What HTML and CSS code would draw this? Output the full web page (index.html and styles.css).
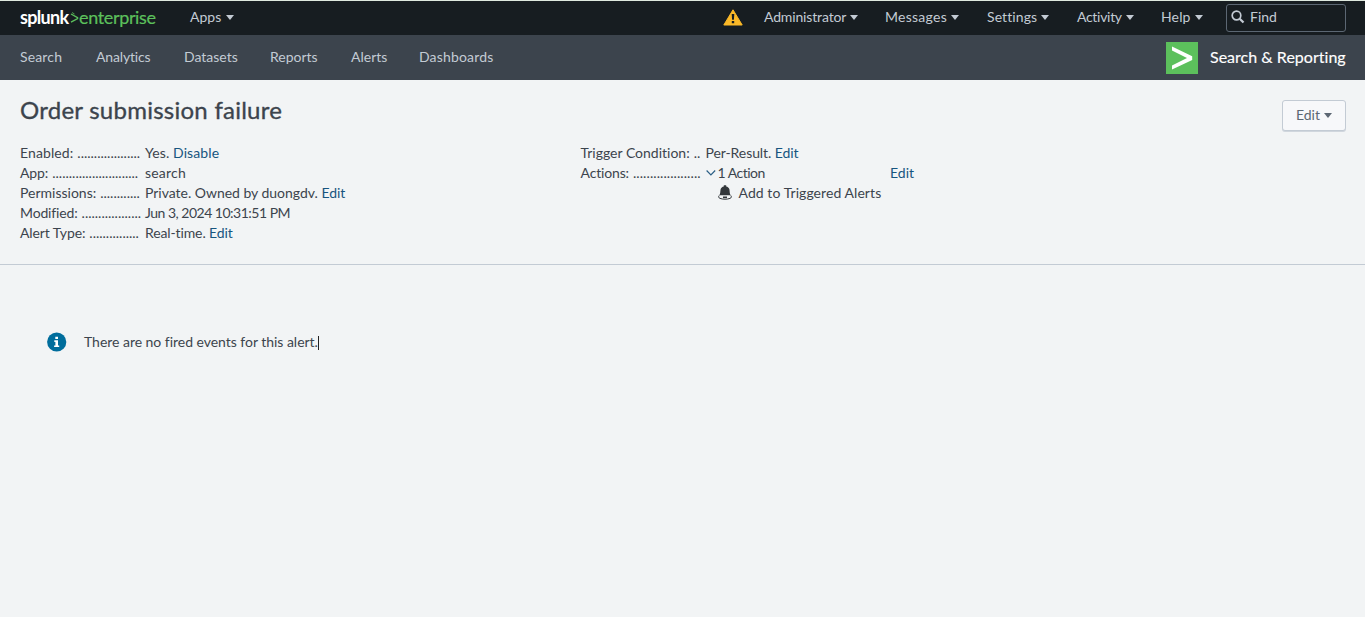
FILE: index.html
```html
<!DOCTYPE html>
<html lang="en">
<head>
<meta charset="utf-8">
<title>Order submission failure | Splunk</title>
<link rel="stylesheet" href="styles.css">
</head>
<body>
<header class="topbar">
  <a class="brand"><span class="brand-name">splunk</span><svg class="brand-arrow" width="9" height="14" viewBox="0 0 9 14"><path d="M1 3 7.600 6.700v.9L1 11.200" fill="none" stroke="#5cc05c" stroke-width="1.400"/><path d="M2 1.500 4.500 3" stroke="#5cc05c" stroke-width=".8"/></svg><span class="brand-product">enterprise</span></a>
  <a class="menu apps"><span>Apps</span><i class="caret"></i></a>
  <svg class="warning" width="20" height="17" viewBox="0 0 20 17"><path d="M10 .8 19.200 16H.8z" fill="#fbb928" stroke="#fbb928" stroke-linejoin="round"/><path d="M8.700 5h2.600l-.4 5.800H9.100zM8.800 12h2.400v2.300H8.800z" fill="#171d21"/></svg>
  <nav class="menus">
    <a class="menu admin"><span>Administrator</span><i class="caret"></i></a>
    <a class="menu messages"><span>Messages</span><i class="caret"></i></a>
    <a class="menu settings"><span>Settings</span><i class="caret"></i></a>
    <a class="menu activity"><span>Activity</span><i class="caret"></i></a>
    <a class="menu help"><span>Help</span><i class="caret"></i></a>
  </nav>
  <div class="find"><svg width="14" height="14" viewBox="0 0 14 14"><circle cx="5.500" cy="5.500" r="4.300" fill="none" stroke="#c3cbd4" stroke-width="1.700"/><path d="M8.700 8.700 12.500 12.500" stroke="#c3cbd4" stroke-width="2.300"/></svg><span>Find</span></div>
</header>
<div class="appbar">
  <a class="nav n-search">Search</a>
  <a class="nav n-analytics">Analytics</a>
  <a class="nav n-datasets">Datasets</a>
  <a class="nav n-reports">Reports</a>
  <a class="nav n-alerts">Alerts</a>
  <a class="nav n-dash">Dashboards</a>
  <div class="app">
    <svg width="32" height="32" viewBox="0 0 32 32"><path d="M0 0h32v32H0z" fill="#5cc05c"/><path d="M6 4.500v4.100L21 16 6 23.500v4.100L26.200 18v-3.800z" fill="#fff"/></svg>
    <span class="app-name">Search &amp; Reporting</span>
  </div>
</div>
<main>
  <section class="summary">
    <div class="heading"><h1>Order submission failure</h1><button class="edit"><span>Edit</span><i class="caret"></i></button></div>
    <div class="details">
      <dl class="left">
        <dt><span class="l-enabled">Enabled:</span><span class="dots">...................</span></dt><dd class="v-enabled">Yes. <a>Disable</a></dd>
        <dt><span class="l-app">App:</span><span class="dots">..........................</span></dt><dd class="v-app">search</dd>
        <dt><span class="l-perm">Permissions:</span><span class="dots">............</span></dt><dd class="v-perm">Private. Owned by duongdv. <a>Edit</a></dd>
        <dt><span class="l-mod">Modified:</span><span class="dots">..................</span></dt><dd class="v-mod">Jun 3, 2024 10:31:51 PM</dd>
        <dt><span class="l-type">Alert Type:</span><span class="dots">...............</span></dt><dd class="v-type">Real-time. <a>Edit</a></dd>
      </dl>
      <dl class="right">
        <dt><span class="l-trigger">Trigger Condition:</span><span class="dots">..</span></dt><dd class="v-trigger">Per-Result. <a>Edit</a></dd>
        <dt><span class="l-actions">Actions:</span><span class="dots">....................</span></dt>
        <dd class="actions">
          <div class="action-head"><svg width="11" height="8" viewBox="0 0 11 8"><path d="M.6 1.500 4.900 5.800 9.200 1.500" fill="none" stroke="#2b5f85" stroke-width="1.200"/></svg><span class="action-count">1 Action</span><a>Edit</a></div>
          <div class="action-item"><svg width="14" height="15" viewBox="0 0 14 15"><path d="M1.200 10.500C2.600 8.500 2.100 6.500 2.600 4.200 3 2.500 4.400 1.700 5.800 1.400V.3h2.400v1.100C9.600 1.700 11 2.500 11.400 4.200c.5 2.300 0 4.300 1.400 6.300z" fill="#33373b"/><path d="M1.200 10.500C.2 11.600.5 12.800 2 13.400c3 1.100 7 1.100 10 0 1.500-.6 1.800-1.800.8-2.900" fill="#f2f4f5" stroke="#33373b"/><path d="M5 11.500h4v1.600H5z" fill="#33373b"/></svg><span>Add to Triggered Alerts</span></div>
        </dd>
      </dl>
    </div>
  </section>
  <section class="notice">
    <svg width="20" height="20" viewBox="0 0 20 20"><circle cx="9.700" cy="10" r="9.600" fill="#006d9c"/><path d="M8.300 4.700H11v2.400H8.300zM7.300 8.300H11v5.100h1.200v1.700H7.100v-1.700h1.300V9.900H7.300z" fill="#fff"/></svg>
    <span class="message">There are no fired events for this alert.</span><i class="cursor"></i>
  </section>
</main>
</body>
</html>
```
FILE: styles.css
```css
* { box-sizing: border-box; }
body { margin: 0; background: #f2f4f5; color: #3c444d; font: 14px/20px Lato, "Open Sans", sans-serif; font-variant-ligatures: none; white-space: nowrap; }
svg { display: block; flex: none; }
.topbar { height: 35px; border-top: 1px solid #dfe9df; background: #171d21; color: #c3cbd4; display: flex; align-items: center; padding: 0 19px 0 20px; }
.brand { width: 170px; padding-bottom: 2px; display: flex; align-items: center; font-size: 18px; }
.brand-name { color: #fff; font-weight: 700; letter-spacing: -.7px; width: 50px; }
.brand-arrow { margin-top: 2px; }
.brand-product { color: #5cc05c; letter-spacing: -.35px; -webkit-text-stroke: .2px #5cc05c; }
.menu { display: flex; align-items: center; gap: 4px; padding-bottom: 2px; }
.caret { width: 0; height: 0; flex: none; border: 4px solid transparent; border-top: 5px solid currentColor; border-bottom: 0; }
.apps { gap: 5px; }
.warning { margin-left: auto; margin-right: 21px; margin-bottom: 1px; }
.menus { display: flex; }
.admin { width: 121px; letter-spacing: -.15px; }
.messages { width: 102px; letter-spacing: .26px; }
.settings { width: 90px; letter-spacing: .1px; }
.activity { width: 84px; letter-spacing: -.3px; }
.help { width: 65px; letter-spacing: .15px; }
.find { width: 120px; height: 28px; border: 1px solid #5c6773; border-radius: 3px; display: flex; align-items: center; gap: 5px; padding: 0 0 2px 4px; }
.appbar { height: 45px; background: #3c444d; color: #c3cbd4; display: flex; align-items: center; padding: 0 19px 0 20px; }
.nav { padding-bottom: 2px; }
.n-search { width: 76px; letter-spacing: .15px; }
.n-analytics { width: 88px; letter-spacing: -.15px; }
.n-datasets { width: 86px; }
.n-reports { width: 81px; }
.n-alerts { width: 68px; }
.n-dash { letter-spacing: .16px; }
.app { margin-left: auto; width: 180px; display: flex; align-items: center; gap: 12px; }
.app-name { color: #fff; font-size: 16px; letter-spacing: .02px; padding-bottom: 1px; -webkit-text-stroke: .15px #fff; }
.summary { height: 185px; border-bottom: 1px solid #c3cbd4; padding: 15px 19px 0 20px; }
.heading { display: flex; justify-content: space-between; height: 48px; }
h1 { margin: 0; font-size: 24px; line-height: 30px; font-weight: 400; letter-spacing: .25px; -webkit-text-stroke: .35px #3c444d; }
.edit { margin: 5px 0 0; width: 64px; height: 31px; border: 1px solid #c3cbd4; border-radius: 3px; background: #f7f8fa; color: #5c6773; font: inherit; display: flex; align-items: center; justify-content: center; gap: 4px; padding: 0 0 1px; box-shadow: 0 1px 0 #d0d6dd; }
.details { display: flex; }
dl { margin: 0; display: grid; grid-template-columns: 120px auto; grid-auto-rows: minmax(20px, auto); column-gap: 5px; align-content: start; }
.left { width: 560.5px; grid-template-columns: 120px 1fr; }
.right { grid-template-columns: 120px 210px; }
dt { display: flex; height: 20px; gap: 4px; }
dt span { flex: none; }
.l-enabled { letter-spacing: .1px; }
.l-app, .l-type { letter-spacing: -.1px; }
.l-mod, .l-actions { letter-spacing: -.15px; }
dd { margin: 0; }
.v-enabled { letter-spacing: .1px; }
.v-app { letter-spacing: .2px; }
.v-perm { letter-spacing: -.02px; }
.v-mod { letter-spacing: -.5px; }
.v-type { letter-spacing: -.12px; }
.v-trigger { letter-spacing: -.08px; }
.l-actions + .dots { letter-spacing: .08px; }
a { color: inherit; }
dd a { color: #17557f; }
.action-head { display: flex; align-items: center; gap: 1px; }
.action-count { letter-spacing: -.5px; }
.action-head a { margin-left: auto; width: 25.5px; }
.action-item { display: flex; align-items: center; gap: 7px; padding-left: 12px; }
.action-item span { letter-spacing: .07px; }
.action-item svg { margin-top: -1px; }
.notice { display: flex; align-items: center; padding: 67px 0 0 47px; }
.message { margin-left: 17px; letter-spacing: -.03px; }
.cursor { width: 1px; height: 14px; margin-top: 1px; background: #222; }
```
